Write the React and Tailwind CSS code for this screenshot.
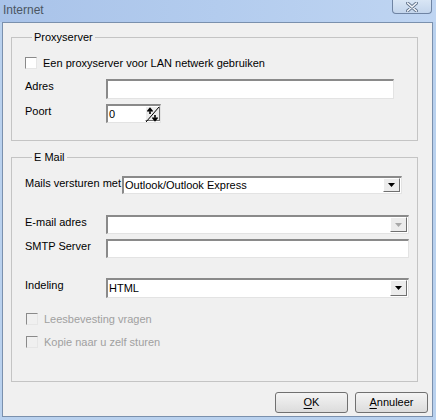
const font = { fontFamily: '"Liberation Sans", Arial, sans-serif' };

function Sunken({ className = '', children }) {
  return (
    <div
      className={`flex items-stretch border-t-2 border-l-2 border-t-[#8a8a8a] border-l-[#8a8a8a] border-b border-r border-b-[#e3e3e3] border-r-[#e3e3e3] bg-white ${className}`}
    >
      {children}
    </div>
  );
}

function Arrow({ disabled }) {
  return (
    <div className="ml-auto flex w-[17px] items-center justify-center border border-t-white border-l-white border-b-[#707070] border-r-[#707070] bg-[#ececec]">
      <svg width="7" height="4" viewBox="0 0 7 4">
        <path d="M0 0h7L3.5 4z" fill={disabled ? '#a8a8a8' : '#000'} />
      </svg>
    </div>
  );
}

function Checkbox({ label, disabled }) {
  return (
    <div className="flex h-[12px] items-center gap-[6px]">
      <div
        className={`h-[12px] w-[12px] border border-t-[#8a8a8a] border-l-[#8a8a8a] border-b-[#e6e6e6] border-r-[#e6e6e6] ${disabled ? 'bg-[#f0f0f0]' : 'bg-white'}`}
      />
      <span className={disabled ? 'text-[#a0a0a0]' : 'text-black'}>{label}</span>
    </div>
  );
}

function Button({ first, rest }) {
  return (
    <button
      type="button"
      className="flex h-[21px] w-[73px] items-center justify-center rounded-[3px] border border-[#707070] bg-gradient-to-b from-[#f4f4f4] to-[#dcdcdc] text-[11px] leading-[13px] text-black"
    >
      <span className="underline underline-offset-2">{first}</span>
      {rest}
    </button>
  );
}

export default function App() {
  return (
    <div className="flex h-[420px] w-[436px] flex-col bg-[#b9d1ee] text-[11px] leading-[13px] text-black" style={font}>
      <div className="relative h-[22px] shrink-0 bg-gradient-to-r from-[#a9c3e9] via-[#b3ccee] to-[#bfd5f2]">
        <span className="absolute left-[3px] top-[3px] text-[12px] leading-[14px] text-[#4b5663]">Internet</span>
        <div className="absolute right-[4px] top-0 flex h-[14px] w-[40px] items-center justify-center rounded-b-[4px] border border-t-0 border-[#6f84a3] bg-gradient-to-b from-[#d9e6f5] to-[#c3d5ec]">
          <svg width="12" height="10" viewBox="0 0 12 10">
            <path d="M1.5 1l9 8M10.5 1l-9 8" stroke="#5d6f88" strokeWidth="3.2" strokeLinecap="round" />
            <path d="M1.5 1l9 8M10.5 1l-9 8" stroke="#f4f7fb" strokeWidth="1.6" strokeLinecap="round" />
          </svg>
        </div>
      </div>

      <div className="mb-[3px] ml-[2px] mr-[3px] flex flex-1 flex-col border border-[#7a90ad] bg-[#f0f0f0] pl-[8px] pt-[8px]">
        <fieldset className="h-[110px] w-[407px] border border-[#c4c4c4] pl-[13px]">
          <legend className="ml-[7px] px-[2px]">Proxyserver</legend>
          <div className="mt-[13px]">
            <Checkbox label="Een proxyserver voor LAN netwerk gebruiken" />
          </div>
          <div className="mt-[10px] flex">
            <span className="w-[81px] pt-[1px]">Adres</span>
            <Sunken className="h-[20px] w-[288px]" />
          </div>
          <div className="mt-[5px] flex">
            <span className="w-[81px] pt-[1px]">Poort</span>
            <Sunken className="h-[19px] w-[55px]">
              <span className="pl-[1px] leading-[16px]">0</span>
              <div className="ml-auto mb-[1px] w-[15px] border border-t-white border-l-white border-b-[#707070] border-r-[#707070] bg-[#ececec]">
                <svg width="13" height="15" viewBox="0 0 13 15">
                  <path d="M0 15L13 0" stroke="#000" strokeWidth="1" />
                  <path d="M4 7V2M1.5 4.5L4 1.5L6.5 4.5" stroke="#000" strokeWidth="1.6" fill="none" />
                  <path d="M9 8v5M6.5 10.5L9 13.5l2.5-3" stroke="#000" strokeWidth="1.6" fill="none" />
                </svg>
              </div>
            </Sunken>
          </div>
        </fieldset>

        <fieldset className="mt-[10px] h-[231px] w-[407px] border border-[#c4c4c4] pl-[13px]">
          <legend className="ml-[7px] px-[2px]">E Mail</legend>
          <div className="mt-[12px] flex">
            <span className="w-[97px] pt-[1px]">Mails versturen met</span>
            <Sunken className="h-[18px] w-[280px] pr-[1px] pb-[1px]">
              <span className="pl-[1px] leading-[15px]">Outlook/Outlook Express</span>
              <Arrow />
            </Sunken>
          </div>
          <div className="mt-[21px] flex">
            <span className="w-[81px] pt-[1px]">E-mail adres</span>
            <Sunken className="h-[19px] w-[303px] pr-[1px] pb-[1px] bg-white">
              <Arrow disabled />
            </Sunken>
          </div>
          <div className="mt-[5px] flex">
            <span className="w-[81px] pt-[1px]">SMTP Server</span>
            <Sunken className="h-[19px] w-[303px]" />
          </div>
          <div className="mt-[20px] flex">
            <span className="w-[81px] pt-[1px]">Indeling</span>
            <Sunken className="h-[20px] w-[303px] pr-[1px] pb-[1px]">
              <span className="pl-[1px] leading-[17px]">HTML</span>
              <Arrow />
            </Sunken>
          </div>
          <div className="mt-[15px] pl-[1px]">
            <Checkbox label="Leesbevesting vragen" disabled />
          </div>
          <div className="mt-[11px] pl-[1px]">
            <Checkbox label="Kopie naar u zelf sturen" disabled />
          </div>
        </fieldset>

        <div className="mt-[10px] flex gap-[7px] pl-[264px]">
          <Button first="O" rest="K" />
          <Button first="A" rest="nnuleer" />
        </div>
      </div>
    </div>
  );
}
